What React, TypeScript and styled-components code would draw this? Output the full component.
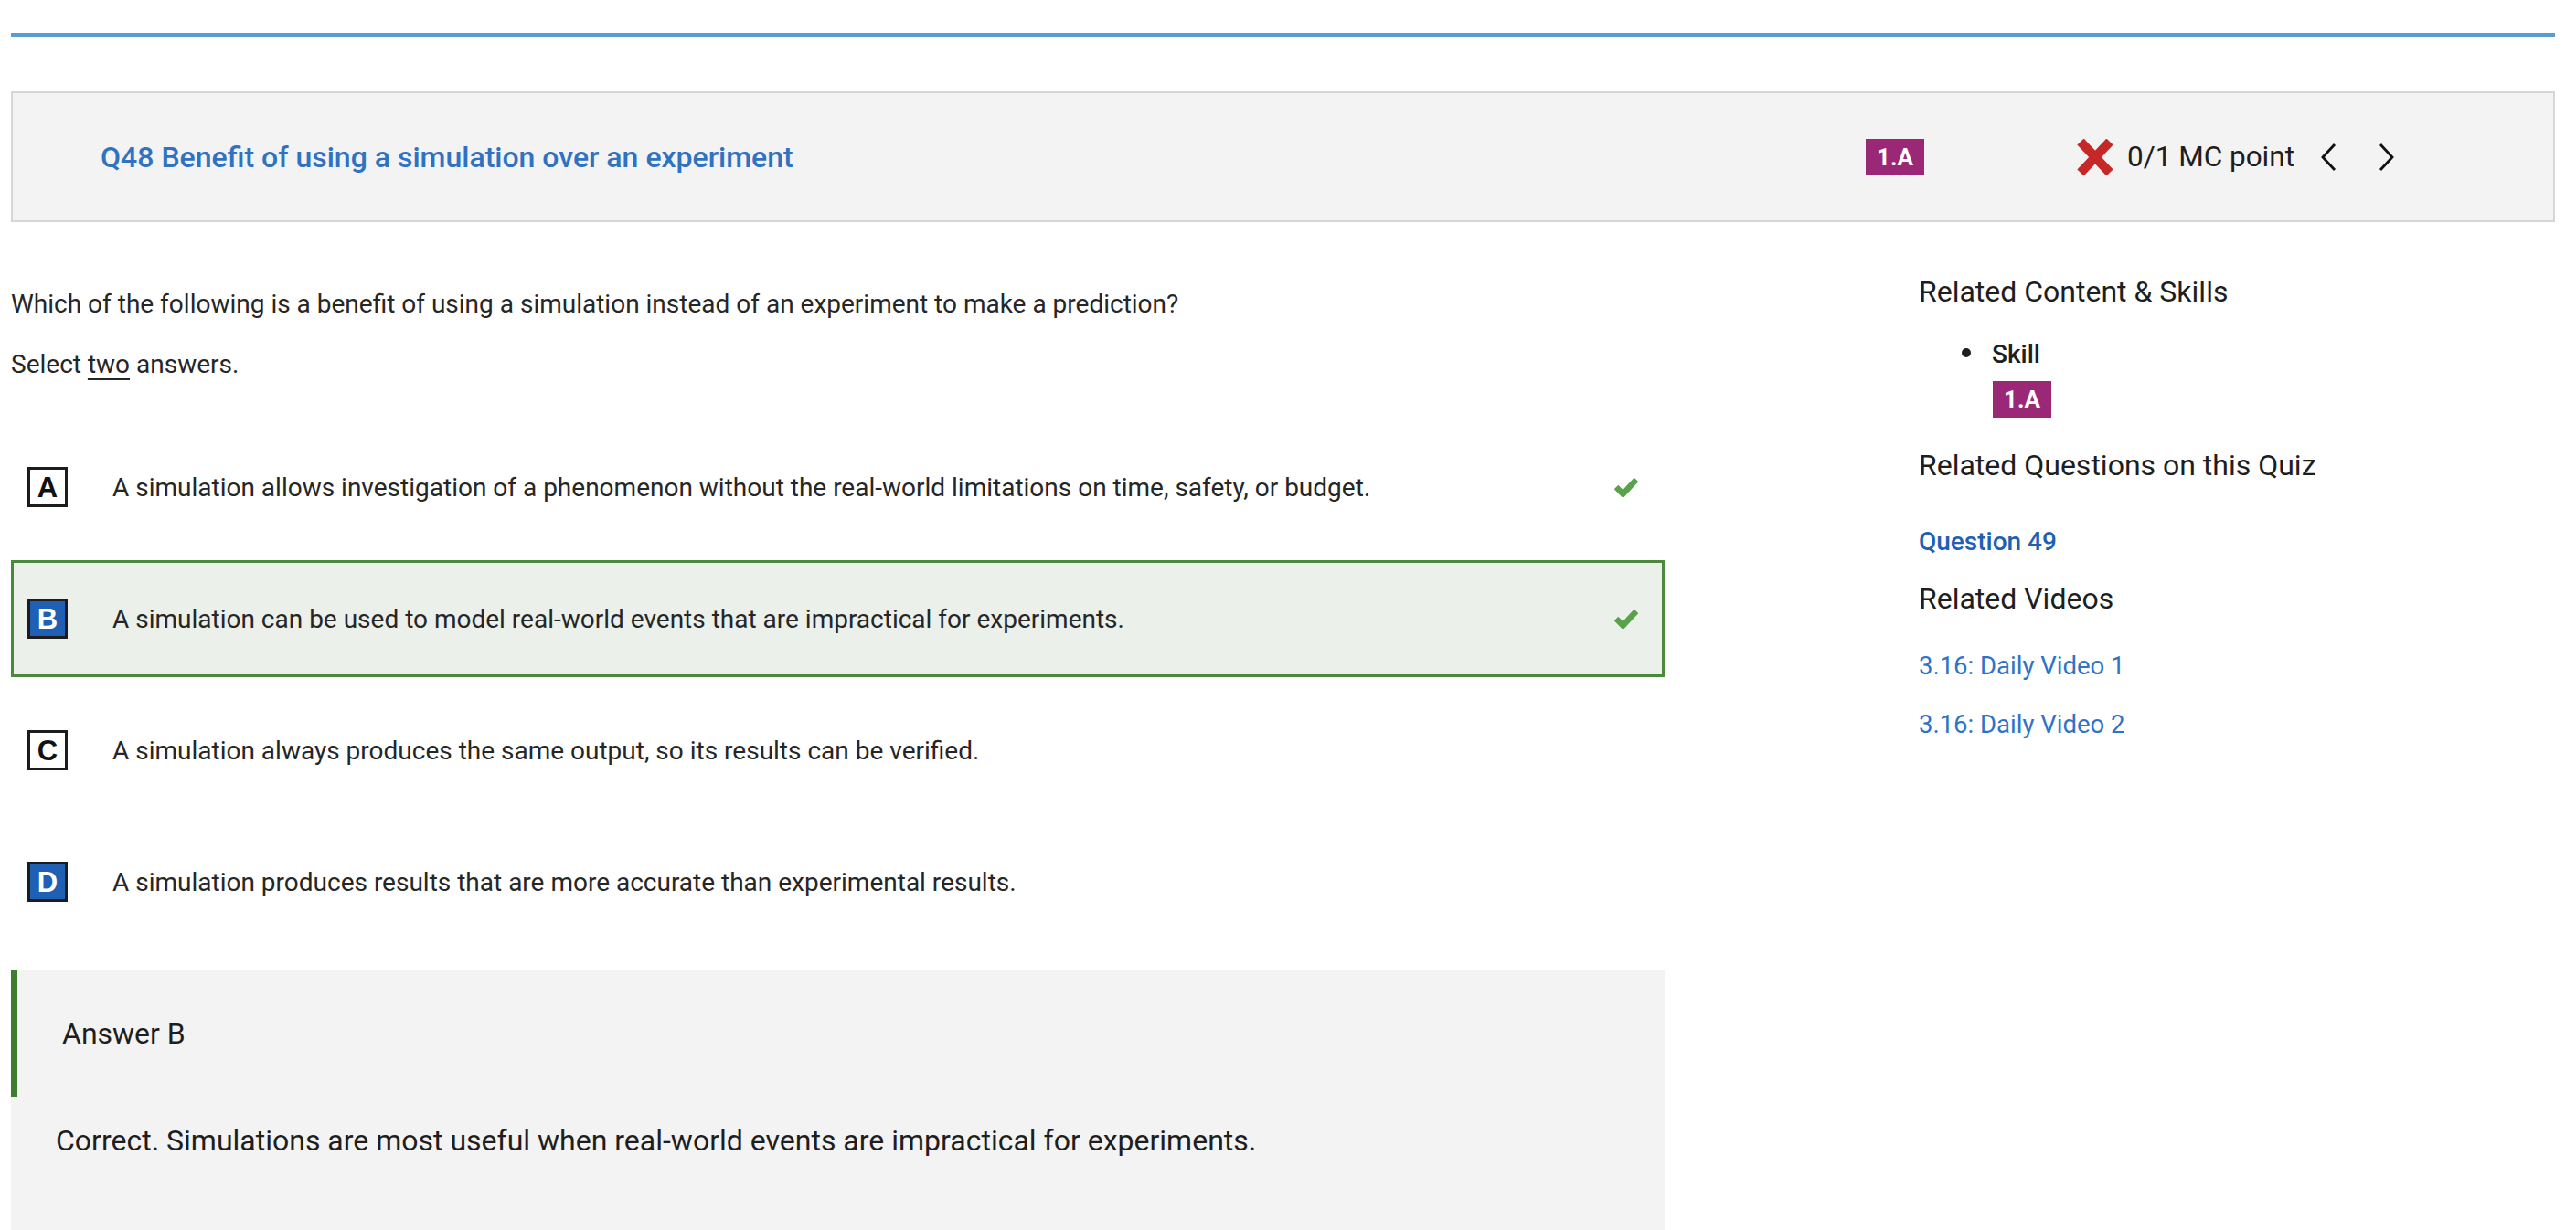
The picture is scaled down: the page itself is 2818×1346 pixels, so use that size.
import React from "react";
import styled, { createGlobalStyle } from "styled-components";

const Global = createGlobalStyle`
  html, body { margin: 0; padding: 0; background: #ffffff; }
  body { font-family: Roboto, "Liberation Sans", Arial, sans-serif; color: #222222; }
  * { box-sizing: border-box; }
`;

const Page = styled.div`
  padding: 36px 23px 80px 12px;
`;

const TopRule = styled.div`
  height: 4px;
  background: #5a9bd3;
`;

const Header = styled.div`
  margin-top: 60px;
  height: 143px;
  background: #f3f3f3;
  border: 2px solid #d6d6da;
  display: flex;
  align-items: center;
  padding: 0 173px 0 96px;
`;

const Title = styled.h1`
  flex: 1;
  margin: 0;
  font-size: 32px;
  font-weight: 500;
  color: #2f72c2;
  line-height: 40px;
`;

const Badge = styled.span<{ $h: number }>`
  display: inline-flex;
  align-items: center;
  justify-content: center;
  width: 64px;
  height: ${(p) => p.$h}px;
  background: #9b2877;
  color: #ffffff;
  font-weight: 700;
  font-size: 26px;
  font-family: Roboto, "Liberation Sans", sans-serif;
`;

const Score = styled.div`
  display: flex;
  align-items: center;
  margin-left: 167px;
`;

const ScoreText = styled.span`
  font-size: 31.5px;
  color: #1e1e1e;
  margin: 0 28px 0 15px;
  line-height: 40px;
`;

const NavButton = styled.button<{ $gap?: number }>`
  border: 0;
  background: transparent;
  padding: 0;
  margin-left: ${(p) => p.$gap ?? 0}px;
  display: flex;
  align-items: center;
  cursor: pointer;
`;

const Body = styled.div`
  display: flex;
  align-items: flex-start;
`;

const Main = styled.div`
  width: 65%;
  flex: none;
  padding-top: 70px;
`;

const Para = styled.p`
  margin: 0 0 27px 0;
  font-size: 28px;
  line-height: 39px;
  color: #262626;
`;

const Under = styled.span`
  text-decoration: underline;
  text-underline-offset: 6px;
  text-decoration-thickness: 2px;
`;

const Options = styled.div`
  margin-top: 51px;
  display: flex;
  flex-direction: column;
  gap: 16px;
`;

const OptionRow = styled.div<{ $selected?: boolean }>`
  height: 128px;
  display: flex;
  align-items: center;
  padding: 0 26px 0 15px;
  border: 3px solid ${(p) => (p.$selected ? "#4b8a3c" : "transparent")};
  background: ${(p) => (p.$selected ? "#ebf0eb" : "transparent")};
`;

const Letter = styled.div<{ $filled?: boolean }>`
  width: 44px;
  height: 44px;
  flex: none;
  border: 3px solid #1c1c1c;
  background: ${(p) => (p.$filled ? "#1f5fb4" : "#ffffff")};
  color: ${(p) => (p.$filled ? "#ffffff" : "#111111")};
  font-family: "Liberation Sans", Arial, sans-serif;
  font-weight: 700;
  font-size: 31px;
  display: flex;
  align-items: center;
  justify-content: center;
  line-height: 1;
`;

const OptionText = styled.div`
  flex: 1;
  margin-left: 49px;
  font-size: 28px;
  line-height: 39px;
  color: #262626;
`;

const Check = styled.div`
  width: 26px;
  display: flex;
  align-items: center;
`;

const AnswerBox = styled.div`
  margin-top: 32px;
  background: #f3f3f3;
  padding-bottom: 90px;
`;

const AnswerHead = styled.div`
  height: 140px;
  border-left: 7px solid #3d7d2d;
  display: flex;
  align-items: center;
  padding-left: 49px;
  font-size: 32px;
  color: #1e1e1e;
`;

const AnswerText = styled.p`
  margin: 0;
  padding: 25px 0 0 49px;
  font-size: 32px;
  line-height: 44px;
  color: #1e1e1e;
`;

const Side = styled.aside`
  margin-left: 278px;
  padding-top: 56px;
  flex: 1;
`;

const SideHeading = styled.h3<{ $mt?: number }>`
  margin: ${(p) => p.$mt ?? 0}px 0 0 0;
  font-size: 32px;
  font-weight: 400;
  line-height: 40px;
  color: #1e1e1e;
`;

const SkillItem = styled.div`
  display: flex;
  align-items: center;
  margin: 31px 0 0 47px;
  font-size: 28px;
  font-weight: 500;
  line-height: 36px;
  color: #1e1e1e;
`;

const Dot = styled.span`
  width: 10px;
  height: 10px;
  border-radius: 50%;
  background: #1e1e1e;
  margin-right: 23px;
  margin-top: -4px;
`;

const SkillBadgeWrap = styled.div`
  margin: 11px 0 32px 81px;
  display: flex;
`;

const SideLink = styled.a<{ $bold?: boolean; $mt: number }>`
  display: block;
  margin-top: ${(p) => p.$mt}px;
  font-size: ${(p) => (p.$bold ? 28 : 27.5)}px;
  line-height: 36px;
  font-weight: ${(p) => (p.$bold ? 500 : 400)};
  color: ${(p) => (p.$bold ? "#1f60b2" : "#2f73c6")};
  text-decoration: none;
`;

const CheckIcon = () => (
  <svg width="26" height="22" viewBox="0 0 26 22">
    <polyline points="2,11 9.5,18.5 24,3" fill="none" stroke="#5aa24a" strokeWidth="6.5" strokeLinejoin="miter" />
  </svg>
);

const XIcon = () => (
  <svg width="40" height="40" viewBox="0 0 40 40">
    <line x1="4" y1="3" x2="36" y2="37" stroke="#c62828" strokeWidth="10" />
    <line x1="36" y1="3" x2="4" y2="37" stroke="#c62828" strokeWidth="10" />
  </svg>
);

const Chevron = ({ dir }: { dir: "left" | "right" }) => (
  <svg width="19" height="32" viewBox="0 0 19 32">
    <polyline
      points={dir === "left" ? "16,2 3,16 16,30" : "3,2 16,16 3,30"}
      fill="none"
      stroke="#111"
      strokeWidth="2.8"
    />
  </svg>
);

const options = [
  { l: "A", t: "A simulation allows investigation of a phenomenon without the real-world limitations on time, safety, or budget.", correct: true, filled: false, selected: false },
  { l: "B", t: "A simulation can be used to model real-world events that are impractical for experiments.", correct: true, filled: true, selected: true },
  { l: "C", t: "A simulation always produces the same output, so its results can be verified.", correct: false, filled: false, selected: false },
  { l: "D", t: "A simulation produces results that are more accurate than experimental results.", correct: false, filled: true, selected: false },
];

export default function App() {
  return (
    <Page>
      <Global />
      <TopRule />
      <Header>
        <Title>Q48 Benefit of using a simulation over an experiment</Title>
        <Badge $h={40}>1.A</Badge>
        <Score>
          <XIcon />
          <ScoreText>0/1 MC point</ScoreText>
          <NavButton aria-label="previous">
            <Chevron dir="left" />
          </NavButton>
          <NavButton aria-label="next" $gap={44}>
            <Chevron dir="right" />
          </NavButton>
        </Score>
      </Header>
      <Body>
        <Main>
          <Para>Which of the following is a benefit of using a simulation instead of an experiment to make a prediction?</Para>
          <Para>
            Select <Under>two</Under> answers.
          </Para>
          <Options>
            {options.map((o) => (
              <OptionRow key={o.l} $selected={o.selected}>
                <Letter $filled={o.filled}>{o.l}</Letter>
                <OptionText>{o.t}</OptionText>
                <Check>{o.correct ? <CheckIcon /> : null}</Check>
              </OptionRow>
            ))}
          </Options>
          <AnswerBox>
            <AnswerHead>Answer B</AnswerHead>
            <AnswerText>Correct. Simulations are most useful when real-world events are impractical for experiments.</AnswerText>
          </AnswerBox>
        </Main>
        <Side>
          <SideHeading>Related Content &amp; Skills</SideHeading>
          <SkillItem>
            <Dot />
            Skill
          </SkillItem>
          <SkillBadgeWrap>
            <Badge $h={40}>1.A</Badge>
          </SkillBadgeWrap>
          <SideHeading>Related Questions on this Quiz</SideHeading>
          <SideLink href="#" $bold $mt={46}>Question 49</SideLink>
          <SideHeading $mt={24}>Related Videos</SideHeading>
          <SideLink href="#" $mt={36}>3.16: Daily Video 1</SideLink>
          <SideLink href="#" $mt={28}>3.16: Daily Video 2</SideLink>
        </Side>
      </Body>
    </Page>
  );
}
